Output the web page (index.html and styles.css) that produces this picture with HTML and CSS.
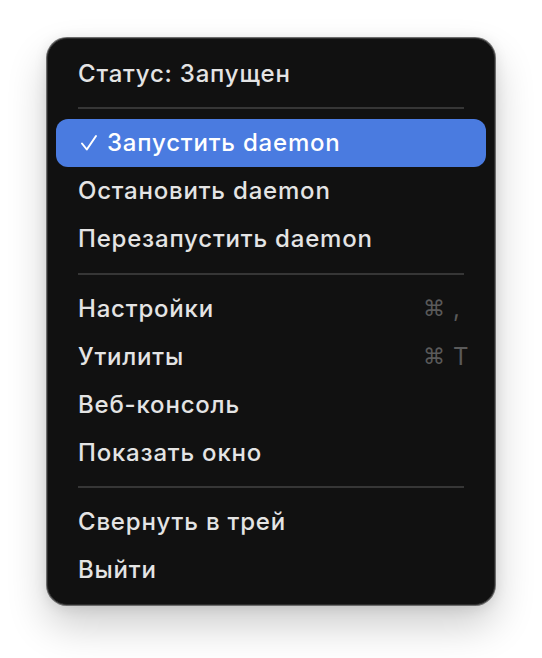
FILE: index.html
```html
<!DOCTYPE html>
<html lang="ru">
<head>
<meta charset="utf-8">
<title>Menu</title>
<link rel="stylesheet" href="styles.css">
</head>
<body>
<div class="menu">
  <div class="item status"><span class="label">Статус: Запущен</span></div>
  <div class="sep"></div>
  <div class="item active"><span class="label"><svg class="check" width="18" height="18" viewBox="0 0 18 18"><path d="M2 9.5 L6.8 15.5 L16 2" fill="none" stroke="#ffffff" stroke-width="2" stroke-linecap="round" stroke-linejoin="round"/></svg>Запустить daemon</span></div>
  <div class="item"><span class="label">Остановить daemon</span></div>
  <div class="item"><span class="label">Перезапустить daemon</span></div>
  <div class="sep"></div>
  <div class="item"><span class="label">Настройки</span><span class="shortcut"><span class="cmd">⌘</span><span class="key">,</span></span></div>
  <div class="item"><span class="label">Утилиты</span><span class="shortcut"><span class="cmd">⌘</span><span class="key">T</span></span></div>
  <div class="item"><span class="label">Веб-консоль</span></div>
  <div class="item"><span class="label">Показать окно</span></div>
  <div class="sep"></div>
  <div class="item"><span class="label">Свернуть в трей</span></div>
  <div class="item"><span class="label">Выйти</span></div>
</div>
</body>
</html>
```

FILE: styles.css
```css
html, body {
  margin: 0;
  padding: 0;
  background: #ffffff;
}
body {
  padding: 38px 46px 52px 47px;
  width: 542px;
  height: 658px;
  box-sizing: border-box;
  overflow: hidden;
  font-family: "Inter", "Liberation Sans", sans-serif;
}
.menu {
  width: 448px;
  box-sizing: border-box;
  background: #111111;
  border: 1px solid #2c2c2c;
  border-radius: 20px;
  padding: 10px 8px;
  box-shadow: 0 0 0 1px #6c6c6c, 0 20px 40px rgba(0, 0, 0, 0.2), 0 2px 14px rgba(0, 0, 0, 0.1);
  display: flex;
  flex-direction: column;
}
.item {
  height: 48px;
  display: flex;
  align-items: center;
  justify-content: space-between;
  padding: 0 19px 0 22px;
  border-radius: 12px;
  color: #e4e4e4;
  font-size: 24px;
  font-weight: 450;
  letter-spacing: 0.8px;
}
.label {
  display: flex;
  align-items: center;
}
.item.active {
  background: #4a7be0;
  color: #ffffff;
}
.check {
  margin: 0 9px 0 2px;
}
.sep {
  height: 2px;
  background: #363636;
  margin: 10px 22px 9.5px 22px;
}
.shortcut {
  width: 44px;
  display: flex;
  align-items: center;
  gap: 8px;
  color: #5a5a5a;
  font-weight: 400;
  letter-spacing: 0;
}
.cmd {
  font-family: "DejaVu Sans", sans-serif;
  font-size: 22px;
}
```
